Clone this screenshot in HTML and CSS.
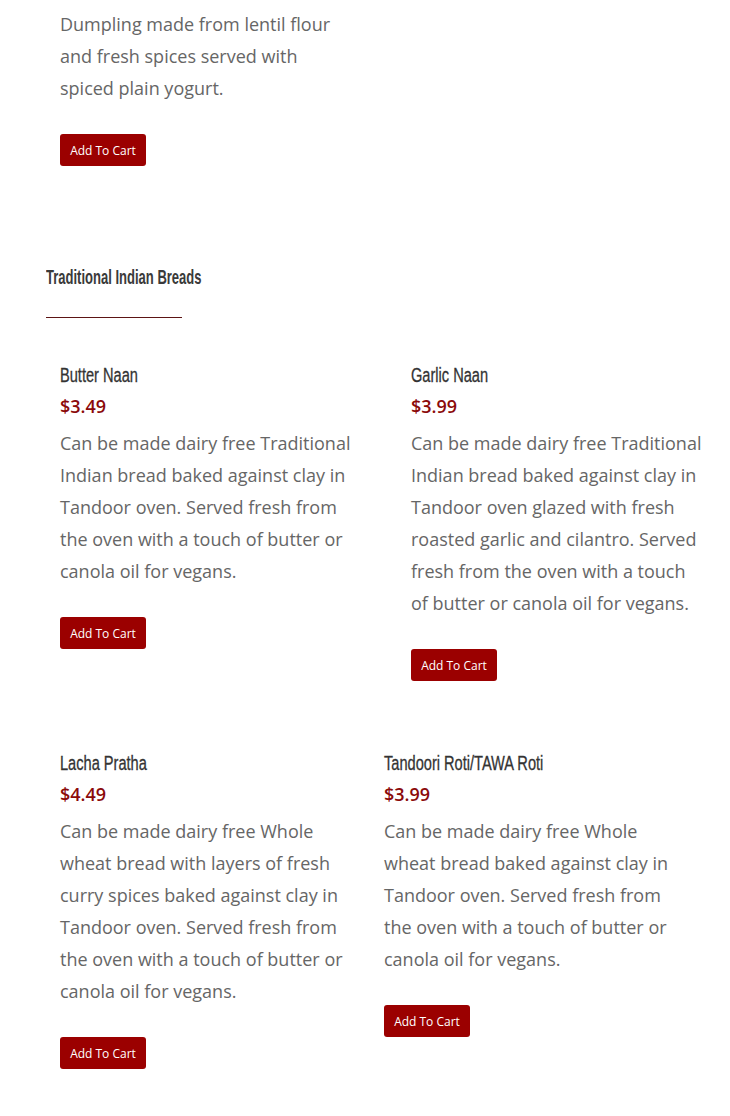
FILE: index.html
```html
<!DOCTYPE html>
<html>
<head>
<meta charset="utf-8">
<link rel="stylesheet" href="styles.css">
</head>
<body>
<div class="page">
  <div class="item top-item">
    <p class="desc">Dumpling made from lentil flour and fresh spices served with spiced plain yogurt.</p>
    <button class="cart">Add To Cart</button>
  </div>

  <h2 class="section"><span class="cond-b">Traditional Indian Breads</span></h2>
  <div class="rule"></div>

  <div class="row row-a">
    <div class="item">
      <h3 class="title"><span class="cond">Butter Naan</span></h3>
      <div class="price">$3.49</div>
      <p class="desc">Can be made dairy free Traditional Indian bread baked against clay in Tandoor oven. Served fresh from the oven with a touch of butter or canola oil for vegans.</p>
      <button class="cart">Add To Cart</button>
    </div>
    <div class="item">
      <h3 class="title"><span class="cond">Garlic Naan</span></h3>
      <div class="price">$3.99</div>
      <p class="desc">Can be made dairy free Traditional Indian bread baked against clay in Tandoor oven glazed with fresh roasted garlic and cilantro. Served fresh from the oven with a touch of butter or canola oil for vegans.</p>
      <button class="cart">Add To Cart</button>
    </div>
  </div>

  <div class="row row-b">
    <div class="item">
      <h3 class="title"><span class="cond">Lacha Pratha</span></h3>
      <div class="price">$4.49</div>
      <p class="desc">Can be made dairy free Whole wheat bread with layers of fresh curry spices baked against clay in Tandoor oven. Served fresh from the oven with a touch of butter or canola oil for vegans.</p>
      <button class="cart">Add To Cart</button>
    </div>
    <div class="item">
      <h3 class="title"><span class="cond">Tandoori Roti/TAWA Roti</span></h3>
      <div class="price">$3.99</div>
      <p class="desc">Can be made dairy free Whole wheat bread baked against clay in Tandoor oven. Served fresh from the oven with a touch of butter or canola oil for vegans.</p>
      <button class="cart">Add To Cart</button>
    </div>
  </div>
</div>
</body>
</html>
```

FILE: styles.css
```css
* { box-sizing: border-box; }
html, body { margin: 0; padding: 0; background: #fff; }
body { font-family: "Open Sans", sans-serif; }
.page { padding: 8px 0 0 46px; width: 730px; }
.item { padding-left: 14px; display: flex; flex-direction: column; align-items: flex-start; }
.desc {
  margin: 0;
  width: 296px;
  font-size: 18px;
  line-height: 32px;
  color: #666;
}
.top-item .desc { width: 285px; }
.cart {
  margin-top: 30px;
  height: 32px;
  width: 86px;
  padding: 0;
  border: none;
  border-radius: 3px;
  background: #9b0000;
  color: #fff;
  font-family: "Open Sans", sans-serif;
  font-size: 12px;
}
.section {
  margin: 95px 0 0 0;
  font-family: "Liberation Sans", sans-serif;
  font-weight: bold;
  font-size: 21px;
  line-height: 32px;
  color: #3a3a3a;
}
.cond-b {
  display: inline-block;
  transform: scaleX(0.62);
  transform-origin: left center;
  white-space: nowrap;
}
.rule {
  margin-top: 24px;
  width: 136px;
  height: 1px;
  background: #5c1414;
}
.title {
  margin: 0;
  font-family: "Liberation Sans", sans-serif;
  font-weight: normal;
  font-size: 20px;
  line-height: 32px;
  height: 32px;
  padding-top: 1px;
  color: #333;
  -webkit-text-stroke: 0.3px #333;
}
.cond {
  display: inline-block;
  transform: scaleX(0.73);
  transform-origin: left center;
  white-space: nowrap;
}
.price {
  font-size: 18px;
  line-height: 32px;
  font-weight: 600;
  color: #8b0a0a;
  margin-bottom: 5px;
}
.row { display: grid; align-items: start; }
.row-a { grid-template-columns: 351px 1fr; margin-top: 40px; }
.row-b { grid-template-columns: 324px 1fr; margin-top: 65px; }
```
